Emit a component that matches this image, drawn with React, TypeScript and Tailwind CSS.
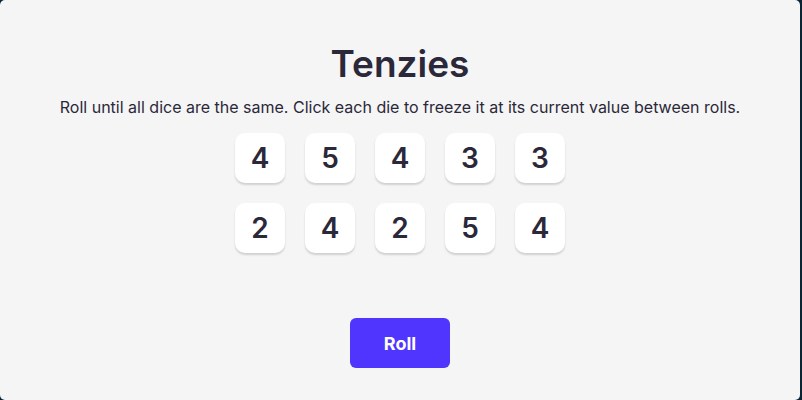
export default function App() {
  const dice = [4, 5, 4, 3, 3, 2, 4, 2, 5, 4];
  return (
    <div className="w-[802px] h-[400px] bg-[#0B2434] overflow-hidden" style={{ fontFamily: "Inter, 'Noto Sans', sans-serif" }}>
      <main className="w-[800px] h-[400px] bg-[#F5F5F5] rounded-[5px] flex flex-col items-center text-[#2B283A]">
        <h1 className="mt-[41px] text-[37px] leading-[46px] font-semibold">Tenzies</h1>
        <p className="mt-[10px] text-[16px] leading-[20px] text-[#2B283A]">
          Roll until all dice are the same. Click each die to freeze it at its current value between rolls.
        </p>
        <div className="mt-[16px] grid grid-cols-5 gap-[20px]">
          {dice.map((d, i) => (
            <button
              key={i}
              className="w-[50px] h-[50px] bg-white rounded-[10px] shadow-[0_2px_2px_rgba(0,0,0,0.15)] flex items-center justify-center text-[28px] font-semibold text-[#2B283A]"
            >
              {d}
            </button>
          ))}
        </div>
        <button className="mt-[65px] w-[100px] h-[50px] bg-[#5035FF] rounded-[6px] text-white text-[18px] font-bold">
          Roll
        </button>
      </main>
    </div>
  );
}
